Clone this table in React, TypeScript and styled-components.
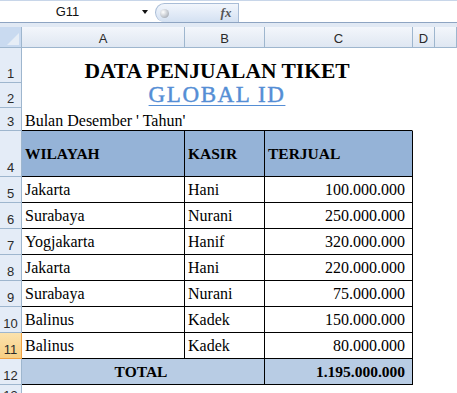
import React from 'react'
import styled, { createGlobalStyle } from 'styled-components'

const GlobalStyle = createGlobalStyle`
  html, body {
    margin: 0;
    padding: 0;
    background: #fff;
  }
`

const Window = styled.div`
  width: 457px;
  height: 393px;
  overflow: hidden;
  background: #fff;
  display: flex;
  flex-direction: column;
`

const FormulaBar = styled.div`
  display: flex;
  height: 23px;
  flex-shrink: 0;
  box-sizing: border-box;
  border-top: 1px solid #c8d6e9;
  border-bottom: 1px solid #8ea4c2;
  background: #fff;
`

const NameBox = styled.div`
  width: 155px;
  display: flex;
  align-items: center;
  font-family: 'Liberation Sans', Arial, sans-serif;
  font-size: 13px;
  color: #111;
`

const NameText = styled.span`
  flex: 1;
  text-align: center;
`

const DropArrow = styled.span`
  width: 20px;
  display: flex;
  justify-content: center;

  &::after {
    content: '';
    border-left: 3.5px solid transparent;
    border-right: 3.5px solid transparent;
    border-top: 4px solid #111;
  }
`

const Knob = styled.div`
  width: 84px;
  margin-top: 2px;
  box-sizing: border-box;
  display: flex;
  align-items: center;
  padding-left: 4px;
  border: 1px solid #a9bdd7;
  border-bottom: none;
  border-radius: 10px 0 0 10px;
  background: linear-gradient(#f2f6fc, #d4e1f2);
`

const Dot = styled.span`
  width: 9px;
  height: 9px;
  border-radius: 50%;
  background: radial-gradient(circle at 35% 35%, #fff 0%, #c3c8cf 55%, #8d939c 100%);
`

const FxLabel = styled.span`
  margin-left: auto;
  width: 24px;
  text-align: center;
  font-family: 'Liberation Serif', 'Times New Roman', serif;
  font-style: italic;
  font-weight: 700;
  font-size: 13px;
  color: #555;
`

const FormulaInput = styled.div`
  flex: 1;
  background: #fff;
`

const Band = styled.div`
  height: 4px;
  flex-shrink: 0;
  background: #e1e9f4;
`

const Sheet = styled.div`
  display: grid;
  grid-template-columns: 22px 163px 80px 148px 22px 1fr;
  grid-template-rows: 21px 35px 25px 23px 46px repeat(8, 26px) 20px;
`

const Corner = styled.div`
  position: relative;
  box-sizing: border-box;
  background: #c9daf0;
  border-right: 1px solid #9eb6ce;
  border-bottom: 1px solid #9eb6ce;

  &::after {
    content: '';
    position: absolute;
    right: 2px;
    bottom: 2px;
    border-left: 12px solid transparent;
    border-bottom: 12px solid #e6edf6;
  }
`

const ColHead = styled.div`
  box-sizing: border-box;
  display: flex;
  align-items: center;
  justify-content: center;
  padding-top: 2px;
  background: linear-gradient(#f3f6fb, #dfe7f2);
  border-right: 1px solid #9eb6ce;
  border-bottom: 1px solid #9eb6ce;
  font-family: 'Liberation Sans', Arial, sans-serif;
  font-size: 13px;
  color: #2a2a2a;
`

const RowHead = styled.div<{ $selected?: boolean }>`
  box-sizing: border-box;
  display: flex;
  align-items: flex-end;
  justify-content: center;
  padding-bottom: 2px;
  line-height: 1;
  background: ${p => (p.$selected ? 'linear-gradient(#fbe2ad, #f8cf83)' : '#e4ecf7')};
  border-right: 1px solid ${p => (p.$selected ? '#f0a244' : '#9eb6ce')};
  border-bottom: 1px solid ${p => (p.$selected ? '#f0a244' : '#9eb6ce')};
  font-family: 'Liberation Sans', Arial, sans-serif;
  font-size: 13px;
  color: #2a2a2a;
`

type Align = 'left' | 'center' | 'right'

const Cell = styled.div<{
  $span?: number
  $align?: Align
  $bottomAlign?: boolean
  $fill?: string
  $bold?: boolean
  $right?: boolean
  $bottom?: boolean
}>`
  grid-column: span ${p => p.$span ?? 1};
  box-sizing: border-box;
  min-width: 0;
  display: flex;
  align-items: ${p => (p.$bottomAlign ? 'flex-end' : 'center')};
  justify-content: ${p =>
    p.$align === 'right' ? 'flex-end' : p.$align === 'center' ? 'center' : 'flex-start'};
  padding: 0 7px 0 3px;
  background: ${p => p.$fill ?? '#fff'};
  border-right: 1px solid ${p => (p.$right ? '#000' : 'transparent')};
  border-bottom: 1px solid ${p => (p.$bottom ? '#000' : 'transparent')};
  font-family: 'Liberation Serif', 'Times New Roman', serif;
  font-size: ${p => (p.$bold ? '15.5px' : '16px')};
  font-weight: ${p => (p.$bold ? 700 : 400)};
  color: #000;
  white-space: nowrap;
`

const Title = styled(Cell)`
  font-size: 21.5px;
  font-weight: 700;
  line-height: 1;
  padding: 0;
`

const Subtitle = styled(Cell)`
  font-size: 23px;
  line-height: 1;
  padding: 0 0 1px 0;
  color: #558ed5;
  letter-spacing: 1.6px;
  -webkit-text-stroke: 0.45px #558ed5;
  text-decoration: underline;
  text-decoration-thickness: 1px;
  text-underline-offset: 3px;
`

const Blank = styled.div<{ $span?: number }>`
  grid-column: span ${p => p.$span ?? 2};
  background: #fff;
`

const HEADER_FILL = '#95b3d7'
const TOTAL_FILL = '#b8cce4'

const sales = [
  { region: 'Jakarta', cashier: 'Hani', sold: '100.000.000' },
  { region: 'Surabaya', cashier: 'Nurani', sold: '250.000.000' },
  { region: 'Yogjakarta', cashier: 'Hanif', sold: '320.000.000' },
  { region: 'Jakarta', cashier: 'Hani', sold: '220.000.000' },
  { region: 'Surabaya', cashier: 'Nurani', sold: '75.000.000' },
  { region: 'Balinus', cashier: 'Kadek', sold: '150.000.000' },
  { region: 'Balinus', cashier: 'Kadek', sold: '80.000.000' },
]

const selectedRow = 11

const App = () => {
  return (
    <Window>
      <GlobalStyle />
      <FormulaBar>
        <NameBox>
          <NameText>G11</NameText>
          <DropArrow />
        </NameBox>
        <Knob>
          <Dot />
          <FxLabel>fx</FxLabel>
        </Knob>
        <FormulaInput />
      </FormulaBar>
      <Band />
      <Sheet>
        <Corner />
        <ColHead>A</ColHead>
        <ColHead>B</ColHead>
        <ColHead>C</ColHead>
        <ColHead>D</ColHead>
        <ColHead />

        <RowHead>1</RowHead>
        <Title $span={3} $align="center" $bottomAlign>
          DATA PENJUALAN TIKET
        </Title>
        <Blank />

        <RowHead>2</RowHead>
        <Subtitle $span={3} $align="center" $bottomAlign>
          GLOBAL ID
        </Subtitle>
        <Blank />

        <RowHead>3</RowHead>
        <Cell $span={3} $bottomAlign $bottom>
          Bulan Desember ' Tahun'
        </Cell>
        <Blank />

        <RowHead>4</RowHead>
        <Cell $fill={HEADER_FILL} $bold $right $bottom>WILAYAH</Cell>
        <Cell $fill={HEADER_FILL} $bold $right $bottom>KASIR</Cell>
        <Cell $fill={HEADER_FILL} $bold $right $bottom>TERJUAL</Cell>
        <Blank />

        {sales.map((row, i) => (
          <React.Fragment key={i}>
            <RowHead $selected={i + 5 === selectedRow}>{i + 5}</RowHead>
            <Cell $right $bottom>{row.region}</Cell>
            <Cell $right $bottom>{row.cashier}</Cell>
            <Cell $align="right" $right $bottom>{row.sold}</Cell>
            <Blank />
          </React.Fragment>
        ))}

        <RowHead>12</RowHead>
        <Cell $span={2} $align="center" $fill={TOTAL_FILL} $bold $right $bottom>
          TOTAL
        </Cell>
        <Cell $align="right" $fill={TOTAL_FILL} $bold $right $bottom>
          1.195.000.000
        </Cell>
        <Blank />

        <RowHead>13</RowHead>
        <Blank $span={5} />
      </Sheet>
    </Window>
  )
}

export default App
